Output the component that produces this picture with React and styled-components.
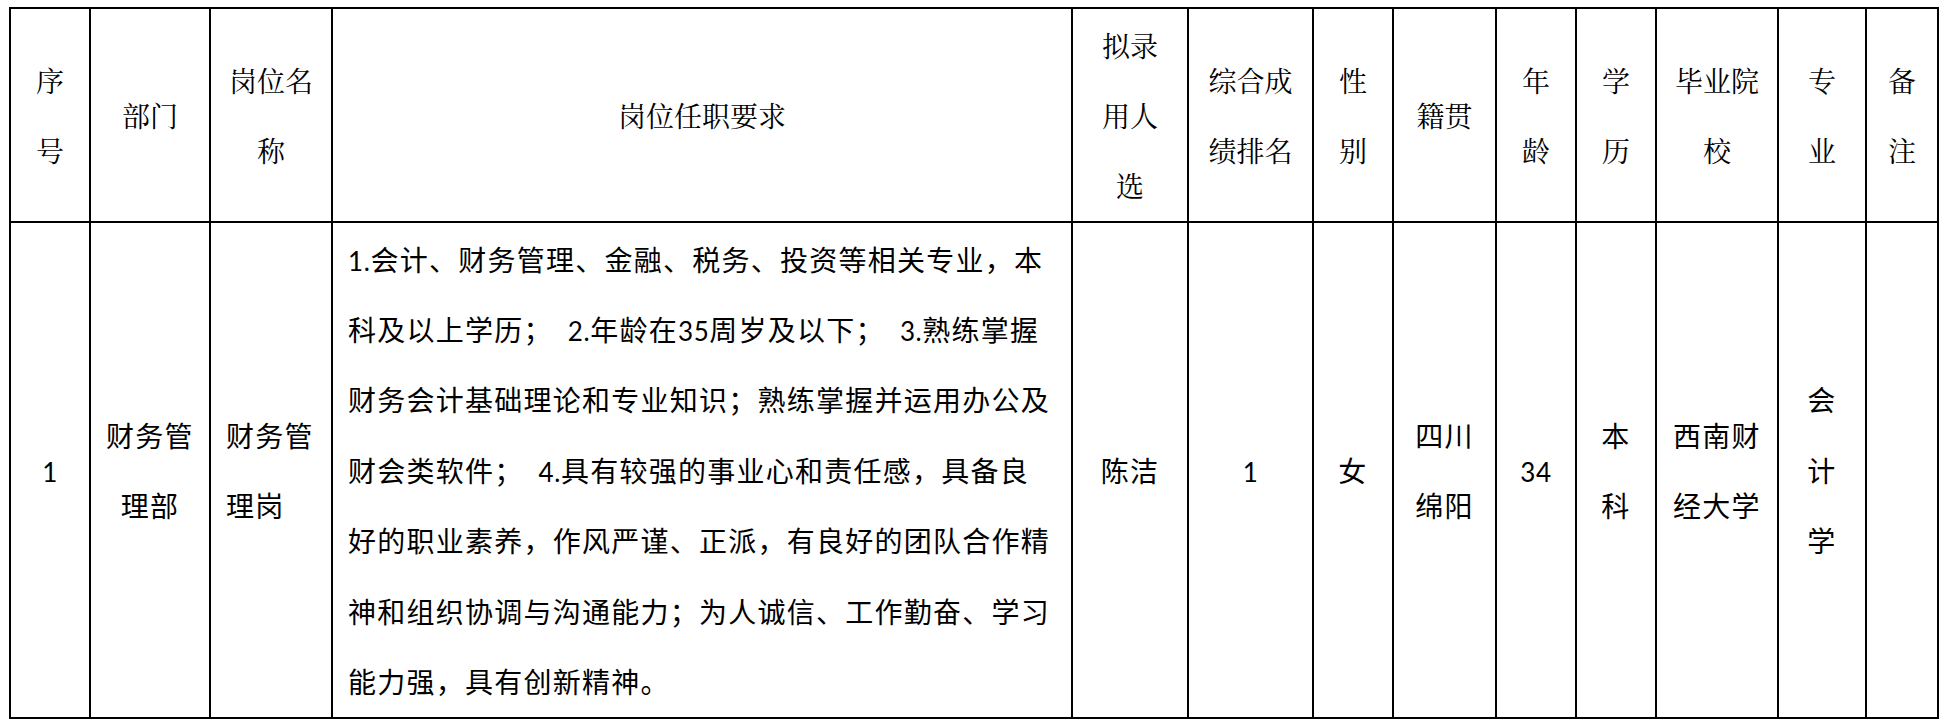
import React from 'react';
import styled, { createGlobalStyle } from 'styled-components';

const GlobalStyle = createGlobalStyle`
  html, body {
    margin: 0;
    padding: 0;
    background: #fff;
  }
  body {
    font-family: 'Noto Sans CJK SC', sans-serif;
    color: #000;
  }
`;

const Page = styled.div`
  padding: 7px 0 0 9px;
`;

const Sheet = styled.table`
  border-collapse: collapse;
  table-layout: fixed;
  width: 1930px;
`;

const HeadCell = styled.th`
  border: 2px solid #000;
  padding: 0;
  height: 212px;
  font-family: 'Noto Serif CJK SC', 'Noto Sans CJK SC', serif;
  font-weight: normal;
  font-size: 28px;
  line-height: 70px;
  text-align: center;
  vertical-align: middle;
`;

const BodyCell = styled.td`
  border: 2px solid #000;
  padding: ${(p) => (p.$left ? '0 0 0 15px' : '0')};
  height: 494px;
  font-size: 28px;
  line-height: 70.4px;
  letter-spacing: 1.25px;
  text-align: ${(p) => (p.$left ? 'left' : 'center')};
  vertical-align: middle;
`;

const Line = styled.div`
  white-space: pre;
`;

const Num = styled.span`
  font-family: 'Lato', 'Liberation Sans', sans-serif;
  font-size: 26px;
  line-height: 1;
  letter-spacing: 0.6px;
`;

const widths = [80, 120, 122, 740, 116, 125, 80, 103, 80, 80, 122, 88, 72];

const head = [
  ['序', '号'],
  ['部门'],
  ['岗位名', '称'],
  ['岗位任职要求'],
  ['拟录', '用人', '选'],
  ['综合成', '绩排名'],
  ['性', '别'],
  ['籍贯'],
  ['年', '龄'],
  ['学', '历'],
  ['毕业院', '校'],
  ['专', '业'],
  ['备', '注'],
];

const Lines = ({ items }) => items.map((t, i) => <Line key={i}>{t}</Line>);

const App = () => {
  return (
    <Page>
      <GlobalStyle />
      <Sheet>
        <colgroup>
          {widths.map((w, i) => (
            <col key={i} style={{ width: w }} />
          ))}
        </colgroup>
        <thead>
          <tr>
            {head.map((h, i) => (
              <HeadCell key={i}>
                <Lines items={h} />
              </HeadCell>
            ))}
          </tr>
        </thead>
        <tbody>
          <tr>
            <BodyCell>
              <Num>1</Num>
            </BodyCell>
            <BodyCell>
              <Lines items={['财务管', '理部']} />
            </BodyCell>
            <BodyCell $left>
              <Lines items={['财务管', '理岗']} />
            </BodyCell>
            <BodyCell $left>
              <Line>
                <Num>1.</Num>会计、财务管理、金融、税务、投资等相关专业，本
              </Line>
              <Line>
                科及以上学历；  <Num>2.</Num>年龄在<Num>35</Num>周岁及以下；  <Num>3.</Num>熟练掌握
              </Line>
              <Line>财务会计基础理论和专业知识；熟练掌握并运用办公及</Line>
              <Line>
                财会类软件；  <Num>4.</Num>具有较强的事业心和责任感，具备良
              </Line>
              <Line>好的职业素养，作风严谨、正派，有良好的团队合作精</Line>
              <Line>神和组织协调与沟通能力；为人诚信、工作勤奋、学习</Line>
              <Line>能力强，具有创新精神。</Line>
            </BodyCell>
            <BodyCell>陈洁</BodyCell>
            <BodyCell>
              <Num>1</Num>
            </BodyCell>
            <BodyCell>女</BodyCell>
            <BodyCell>
              <Lines items={['四川', '绵阳']} />
            </BodyCell>
            <BodyCell>
              <Num>34</Num>
            </BodyCell>
            <BodyCell>
              <Lines items={['本', '科']} />
            </BodyCell>
            <BodyCell>
              <Lines items={['西南财', '经大学']} />
            </BodyCell>
            <BodyCell>
              <Lines items={['会', '计', '学']} />
            </BodyCell>
            <BodyCell />
          </tr>
        </tbody>
      </Sheet>
    </Page>
  );
};

export default App;
